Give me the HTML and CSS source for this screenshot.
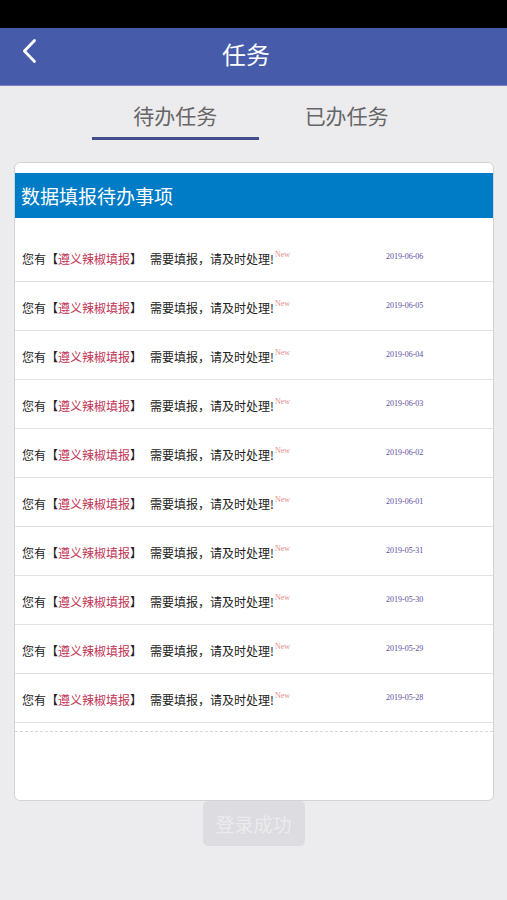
FILE: index.html
```
<!DOCTYPE html>
<html lang="zh-CN">
<head>
  <meta charset="UTF-8" />
  <meta name="viewport" content="width=device-width, initial-scale=1" />
  <title>任务</title>
  <link rel="stylesheet" href="styles.css">
</head>
<body>
  <div class="status-bar"></div>
  <header class="header">
    <button class="back" type="button" aria-label="返回">
      <svg width="16" height="26" viewBox="0 0 16 26" fill="none" stroke="#fff" stroke-width="2.8" stroke-linecap="round" stroke-linejoin="round">
        <path d="M12.5 2.5 L2.4 13 L12.5 23.5" />
      </svg>
    </button>
    <h1>任务</h1>
  </header>

  <nav class="tabs">
    <button class="tab active" type="button">待办任务</button>
    <button class="tab" type="button">已办任务</button>
  </nav>

  <main class="card">
    <h2 class="card-title">数据填报待办事项</h2>
    <table class="tasks">
      <tbody id="task-list"></tbody>
    </table>
  </main>

  <div class="toast" role="status">登录成功</div>

<script>
const dates = [
  "2019-06-06", "2019-06-05", "2019-06-04", "2019-06-03", "2019-06-02",
  "2019-06-01", "2019-05-31", "2019-05-30", "2019-05-29", "2019-05-28"
];

document.getElementById("task-list").innerHTML = dates.map(date => `
  <tr>
    <td class="task">
      <div class="task-text">
        <span>您有【<a href="#">遵义辣椒填报</a>】</span>
        <span>需要填报，请及时处理!<sup>New</sup></span>
      </div>
    </td>
    <td class="date">${date}</td>
  </tr>
`).join('');
</script>
</body>
</html>
```
FILE: styles.css
```
* {
  box-sizing: border-box;
}
body {
  margin: 0;
  min-height: 100vh;
  background: #ecebee;
  color: #222;
  font-family: "Noto Sans CJK SC", sans-serif;
}
button {
  padding: 0;
  border: none;
  background: none;
  font-family: inherit;
  cursor: pointer;
}
.status-bar {
  height: 28px;
  background: #000;
}
.header {
  display: grid;
  grid-template-columns: 60px 1fr 75px;
  height: 58px;
  background: #465ba9;
  border-bottom: 1px solid #7f7fc0;
  color: #fff;
}
.back {
  height: 46px;
  padding-left: 22px;
  text-align: left;
}
.back svg {
  display: block;
}
.header h1 {
  margin: 0;
  font-size: 24px;
  font-weight: 400;
  line-height: 52px;
  text-align: center;
}
.tabs {
  display: flex;
  justify-content: center;
  gap: 4px;
  padding: 10px 0 22px 15px;
}
.tab {
  width: 34%;
  height: 44px;
  padding-bottom: 4px;
  border-bottom: 3px solid transparent;
  color: #666;
  font-size: 21px;
  line-height: 36px;
}
.tab.active {
  border-color: #434f8c;
}
.card {
  margin: 0 13px 0 14px;
  padding: 10px 0 68px;
  background: #fff;
  border: 1px solid #d3d3d6;
  border-radius: 6px;
}
.card-title {
  margin: 0;
  padding: 0 6px;
  background: #007cc7;
  color: #fff;
  font-size: 19px;
  font-weight: 400;
  line-height: 45px;
}
.tasks {
  width: 100%;
  margin-top: 15px;
  padding-bottom: 8px;
  border-spacing: 0;
  border-bottom: 1px dashed #d8d8d8;
}
.tasks td {
  height: 49px;
  padding: 0;
  border-bottom: 1px solid #e2e2e2;
}
.tasks .task {
  padding: 4px 0 0 7px;
  font-size: 12px;
  line-height: 20px;
  white-space: nowrap;
}
.task-text {
  display: flex;
  gap: 8px;
}
.task a {
  color: #bf3456;
  text-decoration: none;
}
.task sup {
  margin-left: 1px;
  color: #e58f8f;
  font-family: "Liberation Serif", serif;
  font-size: 8px;
  line-height: 0;
  vertical-align: 7px;
}
.tasks .date {
  width: 107px;
  padding-bottom: 2px;
  color: #5c4a9c;
  font-family: "Liberation Serif", serif;
  font-size: 8px;
}
.toast {
  position: fixed;
  bottom: 54px;
  left: 50%;
  transform: translateX(-50%);
  padding: 0 13px;
  border-radius: 5px;
  background: #dddce0;
  color: #ebebed;
  font-size: 19px;
  line-height: 45px;
  white-space: nowrap;
}
```
